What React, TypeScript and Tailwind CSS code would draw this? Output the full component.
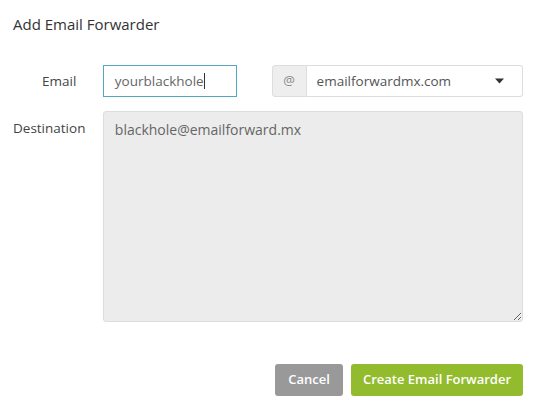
export default function App() {
  return (
    <div className="w-[536px] h-[405px] bg-white font-['Open_Sans',sans-serif] text-[14px] text-[#444] px-[13px] pt-[14px]">
      <h1 className="text-[15px] leading-[20px] text-[#333]">Add Email Forwarder</h1>

      <div className="mt-[31px] flex items-center h-[32px]">
        <label className="w-[90px] pl-[29px] text-[13.5px] text-[#444]">Email</label>
        <div className="w-[134px] h-[32px] border border-[#55a6c2] flex items-center px-[11px] text-[13.5px] text-[#666]">
          yourblackhole<span className="w-px h-[16px] bg-[#333]" />
        </div>
        <div className="ml-[35px] flex h-[32px] w-[252px]">
          <div className="w-[35px] flex items-center justify-center bg-[#eeeeee] border border-[#dddddd] rounded-l-[3px] text-[#888] text-[13px]">
            @
          </div>
          <div className="flex-1 flex items-center justify-between border border-l-0 border-[#dddddd] rounded-r-[3px] pl-[10px] pr-[18px] text-[13.5px] text-[#555]">
            <span>emailforwardmx.com</span>
            <svg width="9" height="6" viewBox="0 0 9 6">
              <path d="M0 0.5 H9 L4.5 5.5 Z" fill="#333" />
            </svg>
          </div>
        </div>
      </div>

      <div className="mt-[14px] flex">
        <label className="w-[90px] pt-[7px] text-[13.5px] text-[#444]">Destination</label>
        <textarea
          className="w-[421px] h-[211px] bg-[#ececec] border border-[#dddddd] rounded-[3px] px-[11px] py-[7px] text-[14px] text-[#666] outline-none"
          defaultValue="blackhole@emailforward.mx"
          readOnly
        />
      </div>

      <div className="mt-[42px] flex justify-end gap-[8px]">
        <button className="w-[68px] h-[32px] bg-[#999999] rounded-[3px] text-white text-[13px] font-semibold">Cancel</button>
        <button className="w-[172px] h-[32px] bg-[#93bb2e] rounded-[3px] text-white text-[13px] font-semibold">Create Email Forwarder</button>
      </div>
    </div>
  )
}
